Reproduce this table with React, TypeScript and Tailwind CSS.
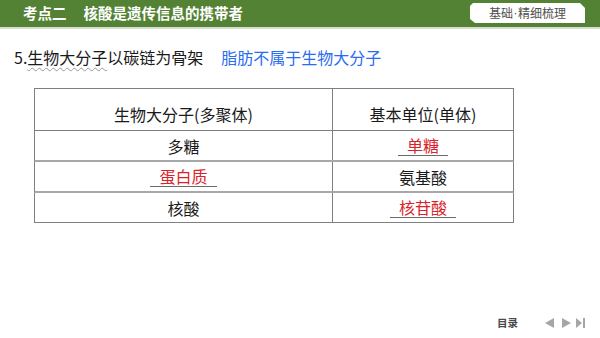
import React from "react";

const F = { fontFamily: '"Noto Sans CJK SC", "Liberation Sans", sans-serif' };

function Ans({ children }: { children: React.ReactNode }) {
  return (
    <span className="inline-block border-b border-[#6b6b6b] px-[9px] leading-[20px] text-[#d9232b]">
      {children}
    </span>
  );
}

export default function App() {
  return (
    <div className="w-[600px] h-[338px] bg-white flex flex-col overflow-hidden" style={F}>
      <div className="h-[29px] bg-[#548235] border-b-2 border-[#d6ddd0] flex items-start">
        <div className="h-[27px] flex items-center pl-[23px] text-white font-bold text-[14.5px] leading-none">
          <span>考点二</span>
          <span className="ml-[17px]">核酸是遗传信息的携带者</span>
        </div>
        <div className="ml-auto mr-[15px] mt-[3px] h-[20px] w-[115px] bg-white flex items-center justify-center text-[12px] text-[#505050] [clip-path:polygon(3px_0,calc(100%-5px)_0,100%_5px,100%_100%,5px_100%,0_calc(100%-4px),0_3px)]">
          基础<span className="font-['Liberation_Sans'] px-[0.5px]">·</span>精细梳理
        </div>
      </div>

      <div className="mt-[17px] pl-[14px] flex items-center text-[16px] leading-[22px]">
        <span className="text-[#1a1a1a]">
          5.
          <span className="underline decoration-wavy decoration-[#9a9a9a] decoration-1 underline-offset-[3px]">
            生物大分子
          </span>
          以碳链为骨架
        </span>
        <span className="ml-[18px] text-[#2a6cf0]">脂肪不属于生物大分子</span>
      </div>

      <div className="mt-[20px] ml-[34px] w-[480px] text-[16px] text-[#1a1a1a]">
        <div className="flex border border-[#7f7f7f]">
          <div className="w-[298px] h-[41px] flex items-center justify-center pt-[8px] border-r border-[#7f7f7f]">
            生物大分子(多聚体)
          </div>
          <div className="flex-1 h-[41px] flex items-center justify-center pt-[8px]">
            基本单位(单体)
          </div>
        </div>
        <div className="flex border-x border-b-2 border-[#a8a8a8] border-x-[#7f7f7f]">
          <div className="w-[298px] h-[29px] flex items-center justify-center border-r border-[#7f7f7f]">多糖</div>
          <div className="flex-1 h-[29px] flex items-center justify-center">
            <Ans>单糖</Ans>
          </div>
        </div>
        <div className="flex border-x border-b-2 border-[#a8a8a8] border-x-[#7f7f7f]">
          <div className="w-[298px] h-[29px] flex items-center justify-center border-r border-[#7f7f7f]">
            <Ans>蛋白质</Ans>
          </div>
          <div className="flex-1 h-[29px] flex items-center justify-center">氨基酸</div>
        </div>
        <div className="flex border-x border-b border-[#7f7f7f]">
          <div className="w-[298px] h-[29px] flex items-center justify-center border-r border-[#7f7f7f]">核酸</div>
          <div className="flex-1 h-[29px] flex items-center justify-center">
            <Ans>核苷酸</Ans>
          </div>
        </div>
      </div>

      <div className="mt-auto h-[30px] flex items-center justify-end pr-[15px]">
        <span className="text-[10.5px] font-bold text-[#4a4a4a] leading-none">目录</span>
        <svg className="ml-[27px]" width="9" height="10" viewBox="0 0 9 10">
          <polygon points="9,0 9,10 0,5" fill="#a6a6a6" />
        </svg>
        <svg className="ml-[8px]" width="9" height="10" viewBox="0 0 9 10">
          <polygon points="0,0 0,10 9,5" fill="#a6a6a6" />
        </svg>
        <svg className="ml-[5px]" width="9" height="10" viewBox="0 0 9 10">
          <polygon points="0,0 0,10 6,5" fill="#a6a6a6" />
          <rect x="7" y="0" width="2" height="10" fill="#a6a6a6" />
        </svg>
      </div>
    </div>
  );
}
